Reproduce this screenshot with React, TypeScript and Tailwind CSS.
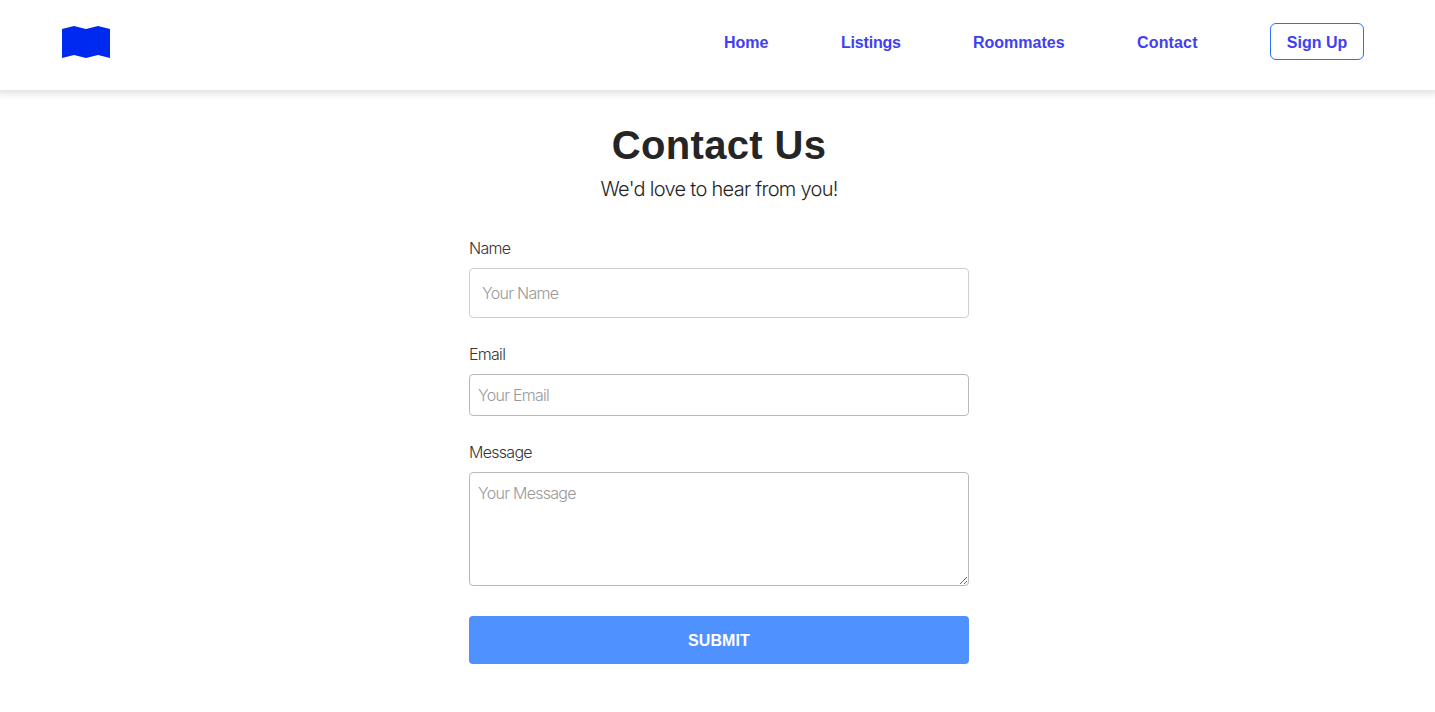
import React from 'react';

const links = [
  { label: 'Home', style: 'w-[45px]' },
  { label: 'Listings', style: 'w-[60px] tracking-[-0.2px]' },
  { label: 'Roommates', style: 'w-[92px]' },
  { label: 'Contact', style: 'w-[61px] tracking-[0.15px]' },
];

const Logo = () => (
  <svg width="48" height="32" viewBox="0 0 48 32" fill="#0029ef">
    <path d="M0 3L12 0L24 3L36 0L48 3V32L36 29L24 32L12 29L0 32Z" />
  </svg>
);

const Navbar = () => (
  <header className="flex h-[90px] items-start justify-between bg-white pr-[71px] pl-[62px] shadow-[0_0_8px_3px_rgba(0,0,0,0.14)]">
    <a href="#" aria-label="Home page" className="mt-[26px]">
      <Logo />
    </a>
    <nav className="mt-[23px] flex items-center gap-[72px] font-bold text-[#4040f2]">
      {links.map((link) => (
        <a key={link.label} href="#" className={`${link.style} pt-0.5 whitespace-nowrap`}>
          {link.label}
        </a>
      ))}
      <a
        href="#"
        className="flex h-[37px] w-[94px] items-center justify-center rounded-[6px] border border-[#2970ff] pt-0.5 whitespace-nowrap"
      >
        Sign Up
      </a>
    </nav>
  </header>
);

const App = () => {
  return (
    <div className="min-h-screen overflow-hidden bg-white font-['Liberation_Sans',Arial,sans-serif] text-base text-[#252525]">
      <Navbar />
      <main className="flex justify-center pt-[31px] pl-[3px]">
        <div className="w-[500px]">
          <h1 className="text-center text-[40px] leading-[48px] font-bold tracking-[0.35px]">Contact Us</h1>
          <p className="mt-[5px] text-center font-['Inter',sans-serif] text-xl leading-[30px] font-light tracking-[-0.71px]">
            We'd love to hear from you!
          </p>
          <form className="mt-8 font-['Inter',sans-serif] font-light tracking-[-0.72px]">
            <label htmlFor="name" className="block leading-6 text-[#363636]">
              Name
            </label>
            <input
              id="name"
              type="text"
              placeholder="Your Name"
              className="mt-2 block h-[50px] w-full rounded-[4px] border border-[#cfcfcf] px-3 placeholder:text-[#999]"
            />
            <label htmlFor="email" className="mt-6 block leading-6 text-[#363636]">
              Email
            </label>
            <input
              id="email"
              type="email"
              placeholder="Your Email"
              className="mt-2 block h-[42px] w-full rounded-[4px] border border-[#b9b9b9] px-2 placeholder:text-[#999]"
            />
            <label htmlFor="message" className="mt-6 block leading-6 text-[#363636]">
              Message
            </label>
            <textarea
              id="message"
              placeholder="Your Message"
              className="mt-2 block h-[114px] w-full rounded-[4px] border border-[#b9b9b9] px-2 py-2 leading-6 placeholder:text-[#999]"
            />
            <button
              type="submit"
              className="mt-[30px] block h-12 w-full rounded-[4px] bg-[#4f92ff] pt-0.5 font-['Liberation_Sans',Arial,sans-serif] font-bold tracking-[0.1px] text-white"
            >
              SUBMIT
            </button>
          </form>
        </div>
      </main>
    </div>
  );
};

export default App;
